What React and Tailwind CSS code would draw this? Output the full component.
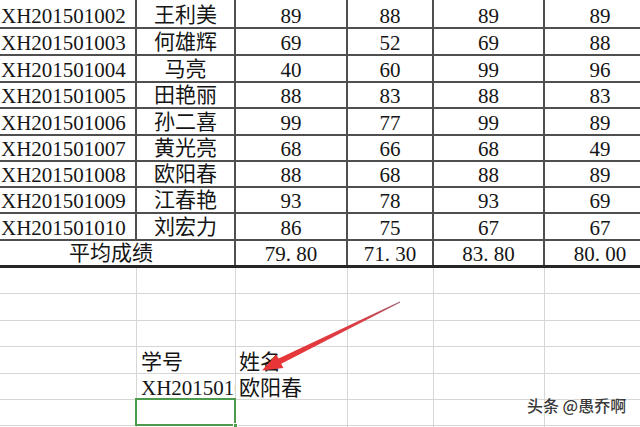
import React from "react";

// 成绩表 + 查找示例（截图复刻）
const scores = [
  ["XH201501002", "王利美", "89", "88", "89", "89"],
  ["XH201501003", "何雄辉", "69", "52", "69", "88"],
  ["XH201501004", "马亮", "40", "60", "99", "96"],
  ["XH201501005", "田艳丽", "88", "83", "88", "83"],
  ["XH201501006", "孙二喜", "99", "77", "99", "89"],
  ["XH201501007", "黄光亮", "68", "66", "68", "49"],
  ["XH201501008", "欧阳春", "88", "68", "88", "89"],
  ["XH201501009", "江春艳", "93", "78", "93", "69"],
  ["XH201501010", "刘宏力", "86", "75", "67", "67"],
];

const averages = ["79.80", "71.30", "83.80", "80.00"];

const rowHeights = ["h-[29px]", "h-[27px]", "h-[27px]", "h-[26px]", "h-[27px]", "h-[26px]", "h-[26px]", "h-[26px]", "h-[27px]"];
const colWidths = ["w-[137px]", "w-[99px]", "w-[112px]", "w-[86px]", "w-[111px]", "w-[110px]"];
const gridHeights = ["h-[26px]", "h-[27px]", "h-[26px]", "h-[27px]", "h-[26px]", "h-[26px]", "h-[26px]"];

const songFont = { fontFamily: '"Liberation Serif", "Noto Sans CJK SC", serif' };

// SimSun 风格：小数点占半角
const Num = ({ v }) => {
  const [a, b] = v.split(".");
  if (b === undefined) return <span>{a}</span>;
  return (
    <span>
      {a}
      <span className="inline-block w-[0.5em]">.</span>
      {b}
    </span>
  );
};

function clsxLike(...parts) {
  return parts.filter(Boolean).join(" ");
}

const Cell = ({ w, center, last, children, extra }) => (
  <div
    className={clsxLike(
      w,
      "shrink-0 flex items-end overflow-hidden whitespace-nowrap leading-[22px]",
      center ? "justify-center" : "justify-start",
      last ? "" : "border-r-2 border-[#4f4f4f]",
      extra
    )}
  >
    {children}
  </div>
);

const App = () => {
  return (
    <div
      className="relative w-[640px] h-[427px] overflow-hidden bg-white text-[21px] text-[#151515] font-['Liberation_Serif','Noto_Sans_CJK_SC',serif]"
      style={songFont}
    >
      {/* 成绩表 */}
      {scores.map((r, i) => (
        <div key={r[0]} className={clsxLike("flex border-b-2 border-[#4f4f4f]", rowHeights[i])}>
          <Cell w={colWidths[0]} extra="pl-px">{r[0]}</Cell>
          <Cell w={colWidths[1]} center extra="pb-px">{r[1]}</Cell>
          <Cell w={colWidths[2]} center><Num v={r[2]} /></Cell>
          <Cell w={colWidths[3]} center><Num v={r[3]} /></Cell>
          <Cell w={colWidths[4]} center><Num v={r[4]} /></Cell>
          <Cell w={colWidths[5]} center last><Num v={r[5]} /></Cell>
        </div>
      ))}

      {/* 平均成绩 */}
      <div className="flex h-[27px] border-b-3 border-[#262626]">
        <Cell w="w-[236px]" center extra="pb-px pr-3">平均成绩</Cell>
        {averages.map((a, i) => (
          <Cell key={a} w={colWidths[i + 2]} center last={i === 3}>
            <Num v={a} />
          </Cell>
        ))}
      </div>

      {/* 下方空白网格 */}
      {gridHeights.map((h, i) => (
        <div key={i} className={clsxLike("flex border-b border-[#d6d6d6]", h)}>
          {colWidths.map((w, j) => (
            <div
              key={j}
              className={clsxLike(
                w,
                "shrink-0 flex items-end overflow-hidden whitespace-nowrap leading-[22px] pl-0.75",
                j < 5 ? "border-r border-[#d6d6d6]" : ""
              )}
            >
              {i === 3 && j === 1 && <span className="pl-px">学号</span>}
              {i === 3 && j === 2 && <span>姓名</span>}
              {i === 4 && j === 1 && <span className="pl-px">XH201501008</span>}
              {i === 4 && j === 2 && <span>欧阳春</span>}
            </div>
          ))}
        </div>
      ))}

      {/* 选中单元格 */}
      <div className="absolute left-[135px] top-[398px] w-[101px] h-[28px] border-2 border-[#4c9a4c]">
        <div className="absolute -right-1 -bottom-1 w-[5px] h-[5px] bg-[#4c9a4c] border border-white" />
      </div>

      {/* 红色箭头 */}
      <svg className="absolute left-0 top-0 pointer-events-none" width="640" height="427" viewBox="0 0 640 427">
        <defs>
          <linearGradient id="arrowFill" x1="400" y1="302" x2="262" y2="370" gradientUnits="userSpaceOnUse">
            <stop offset="0" stopColor="#a06070" />
            <stop offset="0.25" stopColor="#d84048" />
            <stop offset="1" stopColor="#ea3434" />
          </linearGradient>
        </defs>
        <polygon
          points="399.8,301.6 278.6,358.6 276.4,354.6 262,370.5 283.4,367.9 281.2,363.8 400.2,302.4"
          fill="url(#arrowFill)"
        />
      </svg>

      {/* 水印 */}
      <div className="absolute left-[527px] top-[397px] leading-[16px] text-[16px] font-medium text-[#3a3a3a] font-['Noto_Sans_CJK_SC',sans-serif] [text-shadow:0_0_2px_#fff,0_0_2px_#fff,0_0_1px_#fff]">
        头条 @愚乔啊
      </div>
    </div>
  );
};

export default App;
